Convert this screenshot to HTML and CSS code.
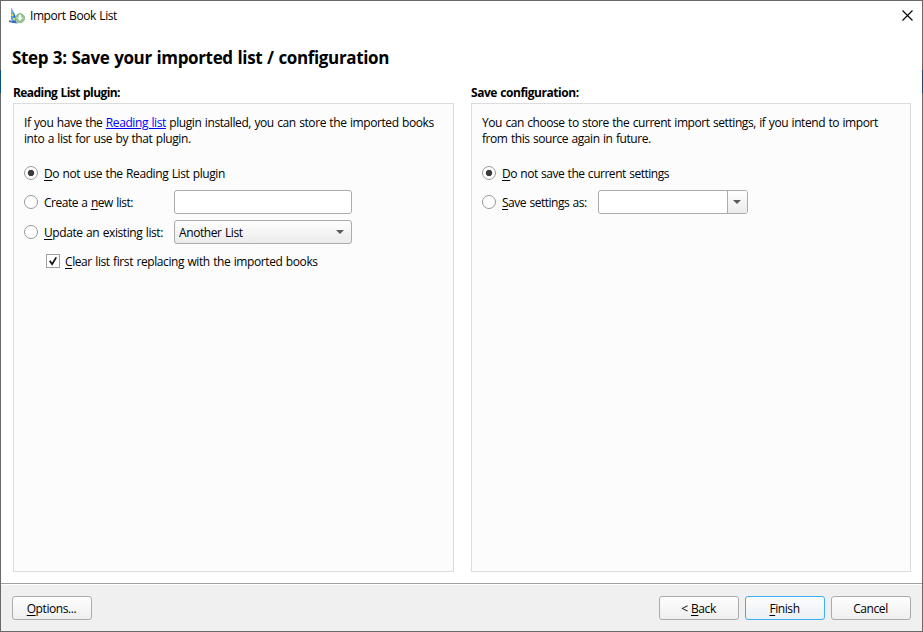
FILE: index.html
```html
<!DOCTYPE html>
<html lang="en">
<head>
<meta charset="utf-8">
<title>Import Book List</title>
<link rel="stylesheet" href="styles.css">
</head>
<body>
<div class="window">
  <header class="titlebar">
    <svg class="app-icon" viewBox="0 0 16 16" width="16" height="16">
      <path d="M2 0 L4 2.5 L6 7 L8 11 L7 14 L2 14 Z" fill="#4aa3dc"/>
      <path d="M2 0 L4 2.5 L3.5 5 L2 5 Z" fill="#8ab4cf"/>
      <path d="M4 5 L5.5 6 L6.5 10 L4.5 9 Z" fill="#1c6fc4"/>
      <path d="M2.5 6h2v2h-2zM4 10h2v2H4z" fill="#dfe05c"/>
      <path d="M0 12.6 L3 12 L6 13 L9 15.4 L4 15 L0 14 Z" fill="#3c67b8"/>
      <path d="M1 12.2 L3 11.6 L4 12.8 L2 13.4 Z" fill="#b5cbe8"/>
      <circle cx="11" cy="10.2" r="4.6" fill="#9cc596" stroke="#78a77b" stroke-width=".7"/>
      <path d="M9.9 6.8h2.2v2.8h1.9l-3 3.2-3-3.2h1.9z" fill="#f8fff6"/>
    </svg>
    <span class="caption">Import Book List</span>
    <svg class="close" viewBox="0 0 11 11" width="11" height="11"><path d="M.5 .5 10.5 10.5M10.5 .5 .5 10.5" stroke="#000" stroke-width="1.1" fill="none"/></svg>
  </header>
  <h1>Step 3: Save your imported list / configuration</h1>
  <main class="columns">
    <section class="column column-list">
      <h2>Reading List plugin:</h2>
      <div class="panel">
        <p>If you have the <a>Reading list</a> plugin installed, you can store the imported books<br>into a list for use by that plugin.</p>
        <div class="row"><i class="radio on"></i><span><u>D</u>o not use the Reading List plugin</span></div>
        <div class="row"><i class="radio"></i><span class="label tight">Create a <u>n</u>ew list:</span><div class="field"></div></div>
        <div class="row tall"><i class="radio"></i><span class="label"><u>U</u>pdate an existing list:</span><div class="field select"><span>Another List</span><i class="arrow"></i></div></div>
        <div class="row indent"><i class="check"><svg viewBox="0 0 14 14" width="14" height="14"><path d="M3.2 6.6 6 10.8 10.8 2.8" fill="none" stroke="#111" stroke-width="2"/></svg></i><span><u>C</u>lear list first replacing with the imported books</span></div>
      </div>
    </section>
    <section class="column column-save">
      <h2 class="wide">Save configuration:</h2>
      <div class="panel">
        <p class="save-note">You can choose to store the current import settings, if you intend to import<br>from this source again in future.</p>
        <div class="row"><i class="radio on"></i><span class="tight"><u>D</u>o not save the current settings</span></div>
        <div class="row"><i class="radio"></i><span class="label tight"><u>S</u>ave settings as:</span><div class="field combo"><span class="drop"><i class="arrow"></i></span></div></div>
      </div>
    </section>
  </main>
  <footer>
    <div class="button options"><span><u>O</u>ptions...</span></div>
    <div class="button"><span>&lt; <u>B</u>ack</span></div>
    <div class="button default"><span><u>F</u>inish</span></div>
    <div class="button"><span>Cancel</span></div>
  </footer>
</div>
</body>
</html>
```
FILE: styles.css
```css
* { box-sizing: border-box; }
body {
  margin: 0;
  font: 12px/16px "Open Sans", "Noto Sans", sans-serif;
  letter-spacing: -0.41px;
  word-spacing: 0.7px;
  color: #000;
}
.window {
  width: 923px;
  height: 632px;
  border: 1px solid #696969;
  border-image: linear-gradient(#696969 0 70px, #0f4f80 70px 93px, #696969 93px) 1;
  background: #fff;
  display: flex;
  flex-direction: column;
  white-space: nowrap;
}
.titlebar {
  height: 30px;
  display: flex;
  align-items: center;
  padding: 0 9px 0 8px;
}
.app-icon { margin: -1px 5px 0 0; }
.caption { letter-spacing: -0.42px; }
.close { margin-left: auto; margin-top: -2px; }
h1 {
  margin: 15px 0 0 11px;
  font-size: 17px;
  line-height: 24px;
  height: 39px;
  letter-spacing: -0.36px;
}
h2 {
  margin: 0;
  font-size: 12px;
  line-height: 16px;
  height: 18px;
  letter-spacing: -0.57px;
}
h2.wide { letter-spacing: -0.46px; }
.columns {
  flex: 1;
  display: flex;
  gap: 17px;
  padding: 0 11px 11px 12px;
}
.column { display: flex; flex-direction: column; }
.column-list { width: 441px; }
.column-save { width: 440px; }
.panel {
  flex: 1;
  border: 1px solid #dcdcdc;
  background: #fcfcfc;
  padding: 11px 10px;
}
p { margin: 0 0 12px; }
.save-note { letter-spacing: -0.43px; }
a { color: #00f; text-decoration: underline; }
u { text-underline-offset: 2px; text-decoration-thickness: 1px; }
.row { height: 29px; display: flex; align-items: center; }
.row.tall { height: 31px; }
.row.indent { padding-left: 22px; height: 27px; }
.tight { letter-spacing: -0.48px; }
.radio {
  width: 14px;
  height: 14px;
  border: 1px solid #999;
  border-radius: 50%;
  background: #fff;
  margin: -2px 6px 0 0;
  flex: none;
}
.radio.on { background: radial-gradient(circle, #3a3a3a 0 2.8px, #fff 3.6px); }
.check {
  width: 14px;
  height: 14px;
  border: 1px solid #a0a0a0;
  background: #fff;
  margin: -1px 5px 0 0;
  display: flex;
  align-items: center;
  justify-content: center;
  flex: none;
}
.label { width: 130px; }
.column-save .label { width: 96px; }
.field {
  width: 178px;
  height: 24px;
  margin-top: -1px;
  border: 1px solid #ababab;
  border-radius: 3px;
  background: #fff;
}
.select {
  display: flex;
  align-items: center;
  justify-content: space-between;
  padding: 1px 7px 0 4px;
  background: linear-gradient(#fefefe, #ebebeb);
}
.combo { width: 150px; display: flex; justify-content: flex-end; }
.drop {
  width: 20px;
  border-left: 1px solid #ababab;
  border-radius: 0 2px 2px 0;
  background: linear-gradient(#fefefe, #ebebeb);
  display: flex;
  align-items: center;
  justify-content: center;
  padding-right: 1px;
}
.arrow {
  margin-top: -1px;
  border: 4px solid transparent;
  border-top-color: #5a5a5a;
  border-bottom: 0;
}
footer {
  height: 48px;
  border-top: 1px solid #a0a0a0;
  box-shadow: inset 0 1px #fff;
  background: #f0f0f0;
  display: flex;
  gap: 6px;
  padding: 12px 11px 0;
}
.button {
  width: 80px;
  height: 24px;
  border: 1px solid #ababab;
  border-radius: 3px;
  background: linear-gradient(#fefefe, #efefef);
  display: flex;
  align-items: center;
  justify-content: center;
  padding: 2px 1px 0 0;
}
.options { margin-right: auto; }
.default {
  border-color: #3daef5;
  background: linear-gradient(#fefefe, #eaf0f6);
}
```
